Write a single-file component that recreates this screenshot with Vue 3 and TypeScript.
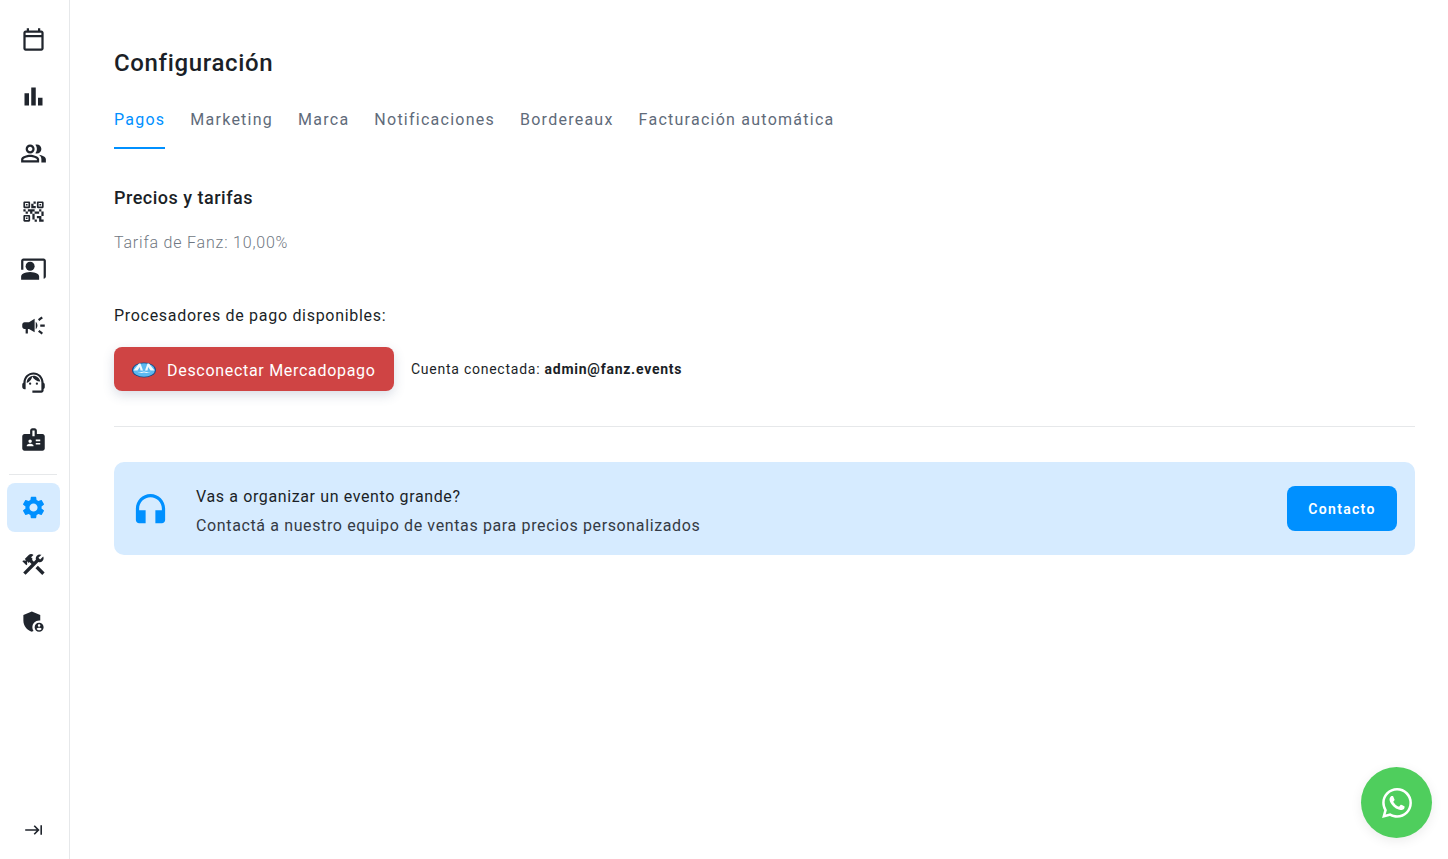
<script setup lang="ts">
interface NavItem {
  name: string
  paths: string[]
  active?: boolean
}

const topNav: NavItem[] = [
  { name: 'Eventos', paths: ['M19 4h-1V2h-2v2H8V2H6v2H5c-1.1 0-2 .9-2 2v14c0 1.1.9 2 2 2h14c1.1 0 2-.9 2-2V6c0-1.1-.9-2-2-2zm0 16H5V10h14v10zm0-12H5V6h14v2z'] },
  { name: 'Reportes', paths: ['M4 9h4v11H4zm12 4h4v7h-4zm-6-9h4v16h-4z'] },
  { name: 'Usuarios', paths: ['M16.67 13.13C18.04 14.06 19 15.32 19 17v3h4v-3c0-2.18-3.57-3.47-6.33-3.87z', 'M15 12c2.21 0 4-1.79 4-4s-1.79-4-4-4c-.47 0-.91.1-1.33.24C14.5 5.27 15 6.58 15 8s-.5 2.73-1.33 3.76c.42.14.86.24 1.33.24z', 'M9 12c2.21 0 4-1.79 4-4s-1.79-4-4-4-4 1.79-4 4 1.79 4 4 4zm0-6c1.1 0 2 .9 2 2s-.9 2-2 2-2-.9-2-2 .9-2 2-2z', 'M9 13c-2.67 0-8 1.34-8 4v3h16v-3c0-2.66-5.33-4-8-4zm6 5H3v-.99C3.2 16.29 6.3 15 9 15s5.8 1.29 6 2v1z'] },
  { name: 'Accesos', paths: ['M15 21h-2v-2h2v2zm-2-7h-2v5h2v-5zm8-2h-2v4h2v-4zm-2-2h-2v2h2v-2zM7 12H5v2h2v-2zm-2-2H3v2h2v-2zm7-5h2V3h-2v2zm-7.5-.5v3h3v-3h-3zM8 9H4c-.55 0-1-.45-1-1V4c0-.55.45-1 1-1h4c.55 0 1 .45 1 1v4c0 .55-.45 1-1 1zm-3.5 10.5h3v-3h-3v3zM8 21H4c-.55 0-1-.45-1-1v-4c0-.55.45-1 1-1h4c.55 0 1 .45 1 1v4c0 .55-.45 1-1 1zm8.5-16.5v3h3v-3h-3zM20 9h-4c-.55 0-1-.45-1-1V4c0-.55.45-1 1-1h4c.55 0 1 .45 1 1v4c0 .55-.45 1-1 1zm-1 10v-3h-4v2h2v3h4v-2h-2zm-2-7h-4v2h4v-2zm-4-2H7v2h2v2h2v-2h2v-2zm1-1V7h-2V5h-2v4h4zM6.75 5.25h-1.5v1.5h1.5v-1.5zm0 12h-1.5v1.5h1.5v-1.5zm12-12h-1.5v1.5h1.5v-1.5z'] },
  { name: 'Clientes', paths: ['M21 3H3c-1.1 0-2 .9-2 2v8h2V5h18v16c1.1 0 2-.9 2-2V5c0-1.1-.9-2-2-2z', 'M9 6a4 4 0 1 0 0 8 4 4 0 0 0 0-8z', 'M15.39 16.56C13.71 15.7 11.53 15 9 15s-4.71.7-6.39 1.56C1.61 17.07 1 18.1 1 19.22V22h16v-2.78c0-1.12-.61-2.15-1.61-2.66z'] },
  { name: 'Campañas', paths: ['M18 11v2h4v-2h-4zm-2 6.61c.96.71 2.21 1.65 3.2 2.39.4-.53.8-1.07 1.2-1.6-.99-.74-2.24-1.68-3.2-2.4-.4.54-.8 1.08-1.2 1.61zM20.4 5.6c-.4-.53-.8-1.07-1.2-1.6-.99.74-2.24 1.68-3.2 2.4.4.53.8 1.07 1.2 1.6.96-.72 2.21-1.65 3.2-2.4zM4 9c-1.1 0-2 .9-2 2v2c0 1.1.9 2 2 2h1v4h2v-4h1l5 3V6L8 9H4zm11.5 3c0-1.33-.58-2.53-1.5-3.35v6.69c.92-.81 1.5-2.01 1.5-3.34z'] },
  { name: 'Soporte', paths: ['M21 12.22C21 6.73 16.74 3 12 3c-4.69 0-9 3.65-9 9.28-.6.34-1 .98-1 1.72v2c0 1.1.9 2 2 2h1v-6.1c0-3.87 3.13-7 7-7s7 3.13 7 7V19h-8v2h8c1.1 0 2-.9 2-2v-1.22c.59-.31 1-.92 1-1.64v-2.3c0-.7-.41-1.31-1-1.62z', 'M9 12a1 1 0 1 0 0 2 1 1 0 0 0 0-2z', 'M15 12a1 1 0 1 0 0 2 1 1 0 0 0 0-2z', 'M18 11.03C17.52 8.18 15.04 6 12.05 6c-3.03 0-6.29 2.51-6.03 6.45 2.47-1.01 4.33-3.21 4.86-5.89 1.31 2.63 4 4.44 7.12 4.47z'] },
  { name: 'Equipo', paths: ['M20 7h-5V4c0-1.1-.9-2-2-2h-2c-1.1 0-2 .9-2 2v3H4c-1.1 0-2 .9-2 2v11c0 1.1.9 2 2 2h16c1.1 0 2-.9 2-2V9c0-1.1-.9-2-2-2zM9 12c.83 0 1.5.67 1.5 1.5S9.83 15 9 15s-1.5-.67-1.5-1.5S8.17 12 9 12zm3 6H6v-.75c0-1 2-1.5 3-1.5s3 .5 3 1.5V18zm1-9h-2V4h2v5zm5 7.5h-4V15h4v1.5zm0-3h-4V12h4v1.5z'] },
]

const bottomNav: NavItem[] = [
  { name: 'Configuración', active: true, paths: ['M19.14 12.94c.04-.3.06-.61.06-.94 0-.32-.02-.64-.07-.94l2.03-1.58c.18-.14.23-.41.12-.61l-1.92-3.32c-.12-.22-.37-.29-.59-.22l-2.39.96c-.5-.38-1.03-.7-1.62-.94l-.36-2.54c-.04-.24-.24-.41-.48-.41h-3.84c-.24 0-.43.17-.47.41l-.36 2.54c-.59.24-1.13.57-1.62.94l-2.39-.96c-.22-.08-.47 0-.59.22L2.74 8.87c-.12.21-.08.47.12.61l2.03 1.58c-.05.3-.09.63-.09.94s.02.64.07.94l-2.03 1.58c-.18.14-.23.41-.12.61l1.92 3.32c.12.22.37.29.59.22l2.39-.96c.5.38 1.03.7 1.62.94l.36 2.54c.05.24.24.41.48.41h3.84c.24 0 .44-.17.47-.41l.36-2.54c.59-.24 1.13-.56 1.62-.94l2.39.96c.22.08.47 0 .59-.22l1.92-3.32c.12-.22.07-.47-.12-.61l-2.01-1.58zM12 15.6c-1.98 0-3.6-1.62-3.6-3.6s1.62-3.6 3.6-3.6 3.6 1.62 3.6 3.6-1.62 3.6-3.6 3.6z'] },
  { name: 'Herramientas', paths: ['M13.78 15.3l6 6 2.11-2.16-6-6z', 'M17.5 10c1.93 0 3.5-1.57 3.5-3.5 0-.58-.16-1.12-.41-1.6l-2.7 2.7-1.49-1.49 2.7-2.7c-.48-.25-1.02-.41-1.6-.41C15.57 3 14 4.57 14 6.5c0 .41.08.8.21 1.16l-1.85 1.85-1.78-1.78.71-.71-1.41-1.41L12 3.49c-1.17-1.17-3.07-1.17-4.24 0L4.22 7.03l1.41 1.41H2.81l-.71.71 3.54 3.54.71-.71V9.15l1.41 1.41.71-.71 1.78 1.78-7.41 7.41 2.12 2.12L16.34 9.79c.36.13.75.21 1.16.21z'] },
  { name: 'Seguridad', paths: ['M17 11c.34 0 .67.04 1 .09V6.27L10.5 3 3 6.27v4.91c0 4.54 3.2 8.79 7.5 9.82.55-.13 1.08-.32 1.6-.55-.69-.98-1.1-2.17-1.1-3.45 0-3.31 2.69-6 6-6z', 'M17 13c-2.21 0-4 1.79-4 4s1.79 4 4 4 4-1.79 4-4-1.79-4-4-4zm0 1.38c.62 0 1.12.51 1.12 1.12s-.51 1.12-1.12 1.12-1.12-.51-1.12-1.12.5-1.12 1.12-1.12zm0 5.37c-.93 0-1.74-.46-2.24-1.17.05-.72 1.51-1.08 2.24-1.08s2.19.36 2.24 1.08c-.5.71-1.31 1.17-2.24 1.17z'] },
]

const tabs = ['Pagos', 'Marketing', 'Marca', 'Notificaciones', 'Bordereaux', 'Facturación automática']
</script>

<template>
  <div class="layout">
    <aside class="sidebar">
      <nav class="nav-group">
        <a v-for="item in topNav" :key="item.name" class="nav-item" :title="item.name">
          <svg width="27" height="27" viewBox="0 0 24 24" fill="currentColor">
            <path v-for="d in item.paths" :key="d" :d="d" />
          </svg>
        </a>
      </nav>
      <div class="nav-divider"></div>
      <nav class="nav-group">
        <a
          v-for="item in bottomNav"
          :key="item.name"
          class="nav-item"
          :class="{ active: item.active }"
          :title="item.name"
        >
          <svg width="27" height="27" viewBox="0 0 24 24" fill="currentColor">
            <path v-for="d in item.paths" :key="d" :d="d" />
          </svg>
        </a>
      </nav>
      <a class="collapse" title="Expandir">
        <svg width="24" height="24" viewBox="0 0 24 24" fill="currentColor">
          <path d="M11.59 7.41L15.17 11H1v2h14.17l-3.59 3.59L13 18l6-6-6-6-1.41 1.41zM20 6v12h2V6h-2z" transform="translate(2.4 2.4) scale(0.8)" />
        </svg>
      </a>
    </aside>

    <main class="content">
      <h1 class="page-title">Configuración</h1>

      <div class="tabs">
        <span v-for="(tab, i) in tabs" :key="tab" class="tab" :class="{ selected: i === 0 }">{{ tab }}</span>
      </div>

      <h2 class="section-title">Precios y tarifas</h2>
      <p class="fee">Tarifa de Fanz: 10,00%</p>

      <p class="processors">Procesadores de pago disponibles:</p>
      <div class="connect-row">
        <button class="mp-button">
          <svg class="mp-logo" width="24" height="18" viewBox="0 0 24 18">
            <ellipse cx="12" cy="10" rx="12" ry="7.6" fill="#1c4a86" />
            <ellipse cx="12" cy="10" rx="11" ry="6.7" fill="#5cb8f0" />
            <path d="M1.500 10.500L7 3.500h1.500L11 10.500H8.500L7.800 7 5.500 10.500zM22.500 10.500L17 3.500h-1.500L13 10.500h2.500L16.200 7l2.300 3.500z" fill="#f2f8fc" />
            <path d="M5 11.800c2 .6 4.500.4 7-.4 2.500.8 5 1 7 .4-2 1.200-4.500 1.300-7 .8-2.500.5-5 .4-7-.8z" fill="#f2f8fc" />
          </svg>
          <span class="mp-label">Desconectar Mercadopago</span>
        </button>
        <span class="account">Cuenta conectada: <b>admin@fanz.events</b></span>
      </div>

      <div class="separator"></div>

      <section class="sales-card">
        <svg class="sales-icon" width="39" height="39" viewBox="0 0 24 24" fill="currentColor">
          <path d="M12 3c-4.97 0-9 4.03-9 9v7c0 1.1.9 2 2 2h4v-8H5v-1c0-3.87 3.13-7 7-7s7 3.13 7 7v1h-4v8h4c1.1 0 2-.9 2-2v-7c0-4.97-4.03-9-9-9z" />
        </svg>
        <div class="sales-text">
          <div class="sales-title">Vas a organizar un evento grande?</div>
          <div class="sales-sub">Contactá a nuestro equipo de ventas para precios personalizados</div>
        </div>
        <button class="contact-button">Contacto</button>
      </section>
    </main>

    <a class="whatsapp" title="WhatsApp">
      <svg width="36" height="36" viewBox="0 0 24 24" fill="#fff">
        <path d="M19.05 4.91A9.816 9.816 0 0 0 12.04 2c-5.46 0-9.91 4.45-9.91 9.91 0 1.75.46 3.45 1.32 4.95L2.05 22l5.25-1.38c1.45.79 3.08 1.21 4.74 1.21 5.46 0 9.91-4.45 9.91-9.91 0-2.65-1.03-5.14-2.9-7.01zm-7.01 15.24c-1.48 0-2.93-.4-4.2-1.15l-.3-.18-3.12.82.83-3.04-.2-.31a8.264 8.264 0 0 1-1.26-4.38c0-4.54 3.7-8.24 8.24-8.24 2.2 0 4.27.86 5.82 2.42a8.183 8.183 0 0 1 2.41 5.83c.02 4.54-3.68 8.23-8.22 8.23zm4.52-6.16c-.25-.12-1.47-.72-1.69-.81-.23-.08-.39-.12-.56.12-.17.25-.64.81-.78.97-.14.17-.29.19-.54.06-.25-.12-1.05-.39-1.99-1.23-.74-.66-1.23-1.47-1.38-1.72-.14-.25-.02-.38.11-.51.11-.11.25-.29.37-.43s.17-.25.25-.41c.08-.17.04-.31-.02-.43s-.56-1.34-.76-1.84c-.2-.48-.41-.42-.56-.43h-.48c-.17 0-.43.06-.66.31-.22.25-.86.85-.86 2.07 0 1.22.89 2.4 1.01 2.56.12.17 1.75 2.67 4.23 3.74.59.26 1.05.41 1.41.52.59.19 1.13.16 1.56.1.48-.07 1.47-.6 1.67-1.18.21-.58.21-1.07.14-1.18s-.22-.16-.47-.28z" />
      </svg>
    </a>
  </div>
</template>

<style scoped>
.layout {
  display: flex;
  height: 859px;
  overflow: hidden;
  background: #fff;
  color: #1b1f27;
  font-family: Roboto, "Liberation Sans", sans-serif;
}

.sidebar {
  box-sizing: border-box;
  width: 70px;
  flex-shrink: 0;
  display: flex;
  flex-direction: column;
  padding: 15px 9px 17px 7px;
  border-right: 1px solid #e6e8ea;
  color: #20252d;
}

.nav-group {
  display: flex;
  flex-direction: column;
  gap: 8px;
}

.nav-item {
  width: 53px;
  height: 49.2px;
  display: flex;
  align-items: center;
  justify-content: center;
  border-radius: 8px;
}

.nav-item.active {
  background: #d6ebff;
  color: #0090ff;
}

.nav-divider {
  height: 1px;
  margin: 9px 3px 8px 2px;
  background: #e6e8ea;
}

.collapse {
  margin-top: auto;
  width: 53px;
  display: flex;
  justify-content: center;
}

.content {
  flex: 1;
  min-width: 0;
  padding: 48px 33px 0 44px;
}

.page-title {
  margin: 0;
  font-size: 24px;
  line-height: 30px;
  font-weight: 500;
  letter-spacing: 0.65px;
}

.tabs {
  display: flex;
  gap: 25px;
  margin-top: 27px;
  height: 44px;
}

.tab {
  font-size: 16px;
  line-height: 30px;
  letter-spacing: 1.25px;
  color: #5f6b7a;
}

.tab.selected {
  color: #0090ff;
  border-bottom: 2px solid #0090ff;
}

.section-title {
  margin: 37px 0 0;
  font-size: 18px;
  line-height: 24px;
  font-weight: 500;
  letter-spacing: 0.5px;
}

.fee {
  margin: 21px 0 0;
  font-size: 16px;
  line-height: 24px;
  letter-spacing: 0.8px;
  font-weight: 300;
  color: #6f7782;
}

.processors {
  margin: 49px 0 0;
  font-size: 16px;
  line-height: 24px;
  letter-spacing: 0.7px;
}

.connect-row {
  display: flex;
  align-items: center;
  gap: 17px;
  margin-top: 19px;
}

.mp-button {
  width: 280px;
  height: 44px;
  display: flex;
  align-items: center;
  gap: 11px;
  padding: 0 18px;
  border: 0;
  border-radius: 8px;
  background: #cf4444;
  color: #fff;
  font-family: inherit;
  font-size: 16px;
  letter-spacing: 0.7px;
  box-shadow: 0 4px 12px rgba(60, 80, 120, 0.2);
}

.mp-logo {
  flex-shrink: 0;
}

.mp-label {
  padding-top: 2px;
}

.account {
  font-size: 14px;
  letter-spacing: 0.75px;
}

.account b {
  font-weight: 700;
}

.separator {
  height: 1px;
  margin-top: 35px;
  background: #e6e8ea;
}

.sales-card {
  display: flex;
  align-items: center;
  height: 93px;
  margin-top: 35px;
  padding: 0 18px 0 17px;
  border-radius: 10px;
  background: #d6ebff;
}

.sales-icon {
  flex-shrink: 0;
  color: #0090ff;
}

.sales-text {
  flex: 1;
  margin-left: 26px;
  padding-top: 5px;
}

.sales-title {
  font-size: 16px;
  line-height: 29px;
  letter-spacing: 0.62px;
}

.sales-sub {
  font-size: 16px;
  line-height: 29px;
  letter-spacing: 0.63px;
  color: #343a44;
}

.contact-button {
  width: 110px;
  height: 45px;
  border: 0;
  border-radius: 8px;
  background: #0090ff;
  color: #fff;
  font-family: inherit;
  font-size: 14px;
  font-weight: 600;
  letter-spacing: 1.3px;
}

.whatsapp {
  position: fixed;
  left: 1361px;
  top: 767px;
  width: 71px;
  height: 71px;
  display: flex;
  align-items: center;
  justify-content: center;
  border-radius: 50%;
  background: #4fce5d;
  box-shadow: 0 3px 12px rgba(0, 0, 0, 0.08);
}
</style>
